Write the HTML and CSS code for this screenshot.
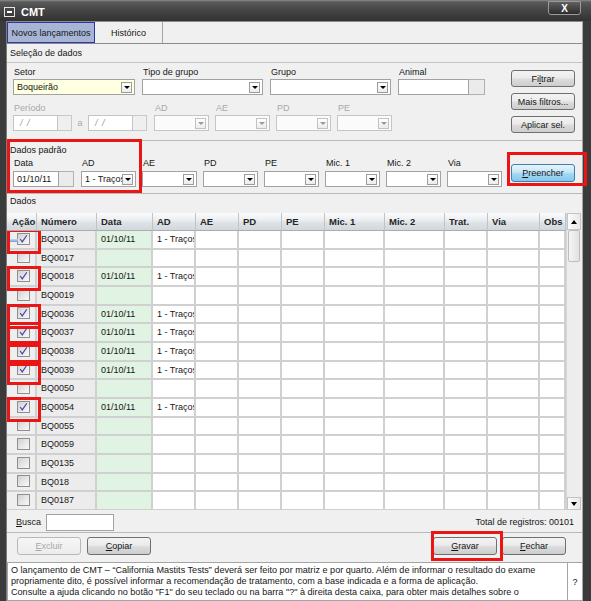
FILE: index.html
```html
<!DOCTYPE html>
<html lang="pt">
<head>
<meta charset="utf-8">
<title>CMT</title>
<link rel="stylesheet" href="styles.css">
</head>
<body>
<div class="win">
  <div class="titlebar">
    <span class="sysicon"></span>
    <span class="title">CMT</span>
    <span class="closebtn">X</span>
  </div>
  <div class="frame">
    <div class="content">
      <div class="tabs">
        <div class="tab active">Novos lançamentos</div>
        <div class="tab hist">Histórico</div>
      </div>
      <div class="sechead">Seleção de dados</div>

      <div class="filters">
        <div class="fleft">
          <div class="frow">
            <div class="field w122">
              <div class="lbl">Setor</div>
              <div class="combo yellow"><span class="val">Boqueirão</span><span class="arrow"></span></div>
            </div>
            <div class="field w121">
              <div class="lbl">Tipo de grupo</div>
              <div class="combo"><span class="val"></span><span class="arrow"></span></div>
            </div>
            <div class="field w121">
              <div class="lbl">Grupo</div>
              <div class="combo"><span class="val"></span><span class="arrow"></span></div>
            </div>
            <div class="field w87">
              <div class="lbl">Animal</div>
              <div class="tinput"><span class="box"></span><span class="side w16"></span></div>
            </div>
          </div>
          <div class="frow r2">
            <div class="field">
              <div class="lbl dis">Período</div>
              <div class="period">
                <div class="tinput dis w59"><span class="box">/ /</span><span class="side"></span></div>
                <span class="a-sep">a</span>
                <div class="tinput dis w59"><span class="box">/ /</span><span class="side"></span></div>
              </div>
            </div>
            <div class="field w55">
              <div class="lbl dis">AD</div>
              <div class="combo dis"><span class="val"></span><span class="arrow"></span></div>
            </div>
            <div class="field w55 g6">
              <div class="lbl dis">AE</div>
              <div class="combo dis"><span class="val"></span><span class="arrow"></span></div>
            </div>
            <div class="field w55 g6">
              <div class="lbl dis">PD</div>
              <div class="combo dis"><span class="val"></span><span class="arrow"></span></div>
            </div>
            <div class="field w55 g6">
              <div class="lbl dis">PE</div>
              <div class="combo dis"><span class="val"></span><span class="arrow"></span></div>
            </div>
          </div>
        </div>
        <div class="btncol">
          <div class="btn">Fi<u>l</u>trar</div>
          <div class="btn">Mais filtros...</div>
          <div class="btn">Aplicar sel.</div>
        </div>
      </div>

      <div class="padrao">
        <div class="pleft">
          <div class="ptitle">Dados padrão</div>
          <div class="prow">
            <div class="field w61">
              <div class="lbl">Data</div>
              <div class="tinput"><span class="box">01/10/11</span><span class="side w15"></span></div>
            </div>
            <div class="field w55 g7">
              <div class="lbl">AD</div>
              <div class="combo"><span class="val clip">1 - Traços</span><span class="arrow"></span></div>
            </div>
            <div class="field w55 g6">
              <div class="lbl">AE</div>
              <div class="combo"><span class="val"></span><span class="arrow"></span></div>
            </div>
            <div class="field w55 g6">
              <div class="lbl">PD</div>
              <div class="combo"><span class="val"></span><span class="arrow"></span></div>
            </div>
            <div class="field w55 g6">
              <div class="lbl">PE</div>
              <div class="combo"><span class="val"></span><span class="arrow"></span></div>
            </div>
            <div class="field w55 g6">
              <div class="lbl">Mic. 1</div>
              <div class="combo"><span class="val"></span><span class="arrow"></span></div>
            </div>
            <div class="field w55 g6">
              <div class="lbl">Mic. 2</div>
              <div class="combo"><span class="val"></span><span class="arrow"></span></div>
            </div>
            <div class="field w55 g6">
              <div class="lbl">Via</div>
              <div class="combo"><span class="val"></span><span class="arrow"></span></div>
            </div>
          </div>
        </div>
        <div class="btn blue preencher"><u>P</u>reencher</div>
      </div>

      <div class="dhead">Dados</div>

      <div class="gridwrap">
        <div class="tbl">
          <div class="thead">
            <div class="th first">Ação</div>
            <div class="th">Número</div>
            <div class="th">Data</div>
            <div class="th">AD</div>
            <div class="th">AE</div>
            <div class="th">PD</div>
            <div class="th">PE</div>
            <div class="th">Mic. 1</div>
            <div class="th">Mic. 2</div>
            <div class="th">Trat.</div>
            <div class="th">Via</div>
            <div class="th">Obs</div>
          </div>
          <div class="tbody">
            <div class="tr"><div class="td act hl focus"><span class="cb"><svg viewBox="0 0 13 12" width="11" height="10"><path d="M2.5 6 L5 9.5 L10.5 1.5" fill="none" stroke="#4545a8" stroke-width="1.4"/></svg></span></div><div class="td num">BQ0013</div><div class="td dt">01/10/11</div><div class="td">1 - Traços</div><div class="td"></div><div class="td"></div><div class="td"></div><div class="td"></div><div class="td"></div><div class="td"></div><div class="td"></div><div class="td"></div></div>
            <div class="tr"><div class="td act"><span class="cb"></span></div><div class="td num">BQ0017</div><div class="td dt"></div><div class="td"></div><div class="td"></div><div class="td"></div><div class="td"></div><div class="td"></div><div class="td"></div><div class="td"></div><div class="td"></div><div class="td"></div></div>
            <div class="tr"><div class="td act hl"><span class="cb"><svg viewBox="0 0 13 12" width="11" height="10"><path d="M2.5 6 L5 9.5 L10.5 1.5" fill="none" stroke="#4545a8" stroke-width="1.4"/></svg></span></div><div class="td num">BQ0018</div><div class="td dt">01/10/11</div><div class="td">1 - Traços</div><div class="td"></div><div class="td"></div><div class="td"></div><div class="td"></div><div class="td"></div><div class="td"></div><div class="td"></div><div class="td"></div></div>
            <div class="tr"><div class="td act"><span class="cb"></span></div><div class="td num">BQ0019</div><div class="td dt"></div><div class="td"></div><div class="td"></div><div class="td"></div><div class="td"></div><div class="td"></div><div class="td"></div><div class="td"></div><div class="td"></div><div class="td"></div></div>
            <div class="tr"><div class="td act hl"><span class="cb"><svg viewBox="0 0 13 12" width="11" height="10"><path d="M2.5 6 L5 9.5 L10.5 1.5" fill="none" stroke="#4545a8" stroke-width="1.4"/></svg></span></div><div class="td num">BQ0036</div><div class="td dt">01/10/11</div><div class="td">1 - Traços</div><div class="td"></div><div class="td"></div><div class="td"></div><div class="td"></div><div class="td"></div><div class="td"></div><div class="td"></div><div class="td"></div></div>
            <div class="tr"><div class="td act hl"><span class="cb"><svg viewBox="0 0 13 12" width="11" height="10"><path d="M2.5 6 L5 9.5 L10.5 1.5" fill="none" stroke="#4545a8" stroke-width="1.4"/></svg></span></div><div class="td num">BQ0037</div><div class="td dt">01/10/11</div><div class="td">1 - Traços</div><div class="td"></div><div class="td"></div><div class="td"></div><div class="td"></div><div class="td"></div><div class="td"></div><div class="td"></div><div class="td"></div></div>
            <div class="tr"><div class="td act hl"><span class="cb"><svg viewBox="0 0 13 12" width="11" height="10"><path d="M2.5 6 L5 9.5 L10.5 1.5" fill="none" stroke="#4545a8" stroke-width="1.4"/></svg></span></div><div class="td num">BQ0038</div><div class="td dt">01/10/11</div><div class="td">1 - Traços</div><div class="td"></div><div class="td"></div><div class="td"></div><div class="td"></div><div class="td"></div><div class="td"></div><div class="td"></div><div class="td"></div></div>
            <div class="tr"><div class="td act hl"><span class="cb"><svg viewBox="0 0 13 12" width="11" height="10"><path d="M2.5 6 L5 9.5 L10.5 1.5" fill="none" stroke="#4545a8" stroke-width="1.4"/></svg></span></div><div class="td num">BQ0039</div><div class="td dt">01/10/11</div><div class="td">1 - Traços</div><div class="td"></div><div class="td"></div><div class="td"></div><div class="td"></div><div class="td"></div><div class="td"></div><div class="td"></div><div class="td"></div></div>
            <div class="tr"><div class="td act"><span class="cb"></span></div><div class="td num">BQ0050</div><div class="td dt"></div><div class="td"></div><div class="td"></div><div class="td"></div><div class="td"></div><div class="td"></div><div class="td"></div><div class="td"></div><div class="td"></div><div class="td"></div></div>
            <div class="tr"><div class="td act hl"><span class="cb"><svg viewBox="0 0 13 12" width="11" height="10"><path d="M2.5 6 L5 9.5 L10.5 1.5" fill="none" stroke="#4545a8" stroke-width="1.4"/></svg></span></div><div class="td num">BQ0054</div><div class="td dt">01/10/11</div><div class="td">1 - Traços</div><div class="td"></div><div class="td"></div><div class="td"></div><div class="td"></div><div class="td"></div><div class="td"></div><div class="td"></div><div class="td"></div></div>
            <div class="tr"><div class="td act"><span class="cb"></span></div><div class="td num">BQ0055</div><div class="td dt"></div><div class="td"></div><div class="td"></div><div class="td"></div><div class="td"></div><div class="td"></div><div class="td"></div><div class="td"></div><div class="td"></div><div class="td"></div></div>
            <div class="tr"><div class="td act"><span class="cb"></span></div><div class="td num">BQ0059</div><div class="td dt"></div><div class="td"></div><div class="td"></div><div class="td"></div><div class="td"></div><div class="td"></div><div class="td"></div><div class="td"></div><div class="td"></div><div class="td"></div></div>
            <div class="tr"><div class="td act"><span class="cb"></span></div><div class="td num">BQ0135</div><div class="td dt"></div><div class="td"></div><div class="td"></div><div class="td"></div><div class="td"></div><div class="td"></div><div class="td"></div><div class="td"></div><div class="td"></div><div class="td"></div></div>
            <div class="tr"><div class="td act"><span class="cb"></span></div><div class="td num">BQ018</div><div class="td dt"></div><div class="td"></div><div class="td"></div><div class="td"></div><div class="td"></div><div class="td"></div><div class="td"></div><div class="td"></div><div class="td"></div><div class="td"></div></div>
            <div class="tr"><div class="td act"><span class="cb"></span></div><div class="td num">BQ0187</div><div class="td dt"></div><div class="td"></div><div class="td"></div><div class="td"></div><div class="td"></div><div class="td"></div><div class="td"></div><div class="td"></div><div class="td"></div><div class="td"></div></div>
          </div>
        </div>
        <div class="vscroll">
          <div class="sbtn up"></div>
          <div class="thumb"></div>
          <div class="track"></div>
          <div class="sbtn down"></div>
        </div>
      </div>

      <div class="busca">
        <span class="blbl"><u>B</u>usca</span>
        <span class="binput"></span>
        <span class="total">Total de registros: 00101</span>
      </div>

      <div class="actions">
        <div class="btn dis w63"><u>E</u>xcluir</div>
        <div class="btn w62 ml6"><u>C</u>opiar</div>
        <div class="btn w62 push"><u>G</u>ravar</div>
        <div class="btn w63 ml5"><u>F</u>echar</div>
      </div>

      <div class="help">
        <div class="helptext">O lançamento de CMT – “California Mastits Tests” deverá ser feito por matriz e por quarto. Além de informar o resultado do exame<br>propriamente dito, é possível informar a recomendação de tratamento, com a base indicada e a forma de aplicação.<br>Consulte a ajuda clicando no botão "F1" do seu teclado ou na barra "?" à direita desta caixa, para obter mais detalhes sobre o</div>
        <div class="helpq">?</div>
      </div>
    </div>
  </div>
</div>
<span class="mark mark-padrao"></span>
<span class="mark mark-preencher"></span>
<span class="mark mark-gravar"></span>
</body>
</html>
```
FILE: styles.css
```css
* { box-sizing: border-box; }
html, body { margin: 0; padding: 0; }
body {
  width: 591px; height: 601px; overflow: hidden; position: relative;
  background: #3b3b3b;
  font-family: "Liberation Sans", Arial, sans-serif;
  font-size: 9px; color: #161616;
}
u { text-decoration: underline; }
.win { display: flex; flex-direction: column; height: 601px; }

/* title bar */
.titlebar {
  height: 21px; flex: none; display: flex; align-items: center;
  background: linear-gradient(#8c8c8c 0, #5a5a5a 2px, #474747 45%, #323232 100%);
}
.sysicon {
  width: 11px; height: 10px; border: 1px solid #e6e6e6; margin-left: 4px; margin-top: 3px;
  display: flex; align-items: center; justify-content: center;
}
.sysicon::after { content: ""; width: 5px; height: 2px; background: #fff; }
.title { color: #fff; font-weight: bold; font-size: 11px; margin-left: 6px; margin-top: 2px; }
.closebtn {
  margin-left: auto; margin-right: 10px; align-self: flex-start; margin-top: 1px;
  width: 33px; height: 14px; border: 1px solid #9a9a9a; border-radius: 0 0 3px 3px;
  background: linear-gradient(#606060, #2c2c2c);
  color: #fff; font-weight: bold; font-size: 10px;
  display: flex; align-items: center; justify-content: center;
}

/* frame */
.frame { flex: 1; min-height: 0; display: flex; padding-left: 6px; padding-right: 8px; }
.content {
  flex: 1; min-width: 0; display: flex; flex-direction: column;
  background: #f0f0f0; border-top: 1px solid #8a8a8a; border-left: 1px solid #7c7c7c; border-right: 1px solid #a8a8a8;
  overflow: hidden;
}

/* tabs */
.tabs { height: 22px; flex: none; display: flex; border-bottom: 1px solid #8c8c8c; }
.tab { height: 21px; display: flex; align-items: center; justify-content: center; border-right: 1px solid #a6a6a6; }
.tab.active { width: 88px; background: #a6b5d6; border: 1px solid #34349e; }
.tab.hist { width: 68px; }

.sechead { height: 19px; flex: none; line-height: 18px; padding-left: 3px; border-bottom: 1px solid #c4c4c4; }

/* filters */
.filters { height: 77px; flex: none; display: flex; padding: 3px 7px 0 6px; }
.fleft { display: flex; flex-direction: column; }
.frow { display: flex; gap: 7px; }
.frow.r2 { margin-top: 7px; gap: 0; }
.field { display: flex; flex-direction: column; }
.lbl { height: 13px; line-height: 13px; padding-left: 1px; white-space: nowrap; }
.lbl.dis { color: #a9a9a9; }
.w122 { width: 122px; } .w121 { width: 121px; } .w87 { width: 87px; }
.w55 { width: 55px; } .w61 { width: 61px; } .w59 { width: 59px; }
.w62 { width: 62px; } .w63 { width: 63px; }
.g6 { margin-left: 6px; } .g7 { margin-left: 7px; }
.frow.r2 > .field:nth-child(2) { margin-left: 7px; }

.combo {
  height: 16px; display: flex; align-items: center; background: #fff;
  border: 1px solid #a2a2a2; overflow: hidden;
}
.combo.yellow { background: #ffffe1; }
.combo .val { flex: 1; min-width: 0; padding-left: 3px; white-space: nowrap; overflow: hidden; }
.combo .val.clip { text-overflow: clip; }
.combo .arrow {
  flex: none; width: 11px; height: 11px; margin-right: 2px;
  border: 1px solid #9c9c9c; background: linear-gradient(#ffffff, #ececec);
  display: flex; align-items: center; justify-content: center;
}
.combo .arrow::after {
  content: ""; width: 0; height: 0;
  border-left: 3px solid transparent; border-right: 3px solid transparent; border-top: 3px solid #000;
}
.combo.dis { border-color: #c6c6c6; background: #fbfbfb; }
.combo.dis .arrow { border-color: #c2c2c2; }
.combo.dis .arrow::after { border-top-color: #9a9a9a; }

.tinput { height: 16px; display: flex; }
.tinput .box {
  flex: 1; min-width: 0; background: #fff; border: 1px solid #a2a2a2;
  padding-left: 3px; line-height: 14px; white-space: pre;
}
.tinput .side { width: 14px; flex: none; background: #ebebeb; border: 1px solid #b0b0b0; border-left: none; }
.tinput .side.w15 { width: 15px; }
.tinput .side.w16 { width: 16px; }
.tinput.dis .box { border-color: #c4c4c4; color: #9a9a9a; font-style: italic; padding-left: 6px; letter-spacing: 1px; }
.tinput.dis .side { border-color: #c8c8c8; background: #efefef; }
.period { display: flex; align-items: center; }
.a-sep { width: 16px; text-align: center; color: #a9a9a9; }

.btncol { margin-left: auto; padding-top: 4px; display: flex; flex-direction: column; gap: 6px; }
.btn {
  width: 64px; height: 17px; display: flex; align-items: center; justify-content: center;
  border: 1px solid #6f6f6f; border-radius: 3px; white-space: nowrap;
  background: linear-gradient(#f3f3f3 0%, #ebebeb 45%, #dcdcdc 55%, #cdcdcd 100%);
  color: #161616;
}
.btn.blue {
  border-color: #3c7fb1;
  background: linear-gradient(#e8f5fc 0%, #c4e6f8 45%, #a3d6f4 55%, #86c7ec 100%);
}
.btn.dis { border-color: #b8b8b8; color: #a8a8a8; background: linear-gradient(#f6f6f6, #ececec); }

/* dados padrão */
.padrao { height: 53px; flex: none; display: flex; border-top: 1px solid #b8b8b8; padding: 3px 7px 0 3px; }
.pleft { display: flex; flex-direction: column; }
.ptitle { height: 13px; line-height: 13px; }
.prow { display: flex; padding-left: 3px; }
.prow .lbl { margin-bottom: 1px; }
.preencher { margin-left: auto; margin-top: 20px; height: 18px; }

.dhead { height: 20px; flex: none; border-top: 1px solid #b8b8b8; padding-left: 3px; line-height: 15px; }

/* table */
.gridwrap { height: 297px; flex: none; display: flex; }
.tbl { width: 559px; flex: none; overflow: hidden; background: #fff; }
.thead, .tr {
  display: grid;
  grid-template-columns: 30px 60px 56px 43px 43px 43px 43px 60px 60px 43px 52px 26px;
}
.thead { height: 18px; }
.th {
  font-weight: bold; font-size: 9.5px; color: #262626; padding-left: 4px; line-height: 17px;
  white-space: nowrap; overflow: hidden;
  background: linear-gradient(#fafbfc 0%, #eceff2 40%, #dce1e5 60%, #d2d7dc 100%);
  border-right: 1px solid #c0c4c8; border-bottom: 1px solid #a9adb1;
}
.th.first { padding-left: 5px; }
.tbody { height: 279px; overflow: hidden; }
.tr { height: 18.67px; }
.td {
  position: relative; white-space: nowrap; overflow: hidden;
  border-right: 2px solid #d0d0d0; border-bottom: 2px solid #d0d0d0;
  padding-left: 4px; line-height: 16px; background: #fff;
}
.td.act { background: #efefef; padding-left: 10px; display: flex; align-items: center; overflow: visible; }
.td.num { background: #ececec; }
.td.dt { background: #e1f3e3; }
.cb {
  width: 13px; height: 12px; border: 1px solid #8f8f8f; margin-top: -1px;
  background: linear-gradient(135deg, #cfcfcf 0%, #e6e6e6 50%, #f8f8f8 100%);
  display: flex; align-items: center; justify-content: center;
}
.td.hl::after {
  content: ""; position: absolute; left: 0; top: -2px; width: 28px; height: 19px;
  border: 3px solid #ec1515; z-index: 3;
}
.td.focus::before {
  content: ""; position: absolute; left: 2px; top: 8px; width: 9px; height: 3px;
  background: linear-gradient(#c7dcf2, #6f9fd4);
}

.vscroll { width: 15px; flex: none; display: flex; flex-direction: column; background: #ededed; border-left: 1px solid #d6d6d6; }
.sbtn {
  height: 17px; flex: none; border: 1px solid #c4c4c4; background: linear-gradient(90deg, #fbfbfb, #e8e8e8);
  display: flex; align-items: center; justify-content: center;
}
.sbtn.up::after { content: ""; border-left: 3px solid transparent; border-right: 3px solid transparent; border-bottom: 4px solid #000; }
.sbtn.down { height: 13px; }
.sbtn.down::after { content: ""; border-left: 3px solid transparent; border-right: 3px solid transparent; border-top: 4px solid #000; }
.thumb { height: 32px; flex: none; margin: 0 1px; border: 1px solid #bdbdbd; border-radius: 2px; background: linear-gradient(90deg, #f4f4f4, #e2e2e2); }
.track { flex: 1; }

/* busca */
.busca { height: 23px; flex: none; display: flex; align-items: flex-start; padding: 4px 8px 0 9px; border-bottom: 1px solid #b8b8b8; }
.blbl { line-height: 17px; }
.binput { width: 68px; height: 17px; margin-left: 5px; background: #fff; border: 1px solid #a2a2a2; }
.total { margin-left: auto; line-height: 17px; }

/* actions */
.actions { height: 29px; flex: none; display: flex; padding: 4px 16px 0 10px; }
.actions .btn { height: 18px; }
.ml6 { margin-left: 6px; } .ml5 { margin-left: 5px; }
.push { margin-left: auto; }

/* help */
.help { flex: 1; display: flex; }
.helptext {
  width: 561px; flex: none; background: #fff; border: 1px solid #a4a4a4;
  padding: 2px 3px; line-height: 11px; font-size: 9.1px; white-space: nowrap; overflow: hidden;
}
.helpq {
  width: 15px; flex: none; background: #fff; border: 1px solid #a4a4a4; border-left: none;
  display: flex; justify-content: center; padding-top: 14px; font-size: 9px;
}

/* annotations */
.mark { position: absolute; border: 3px solid #ec1515; z-index: 5; }
.mark-padrao { left: 7px; top: 139px; width: 135px; height: 54px; }
.mark-preencher { left: 507px; top: 152px; width: 80px; height: 34px; }
.mark-gravar { left: 431px; top: 531px; width: 72px; height: 30px; }
```
